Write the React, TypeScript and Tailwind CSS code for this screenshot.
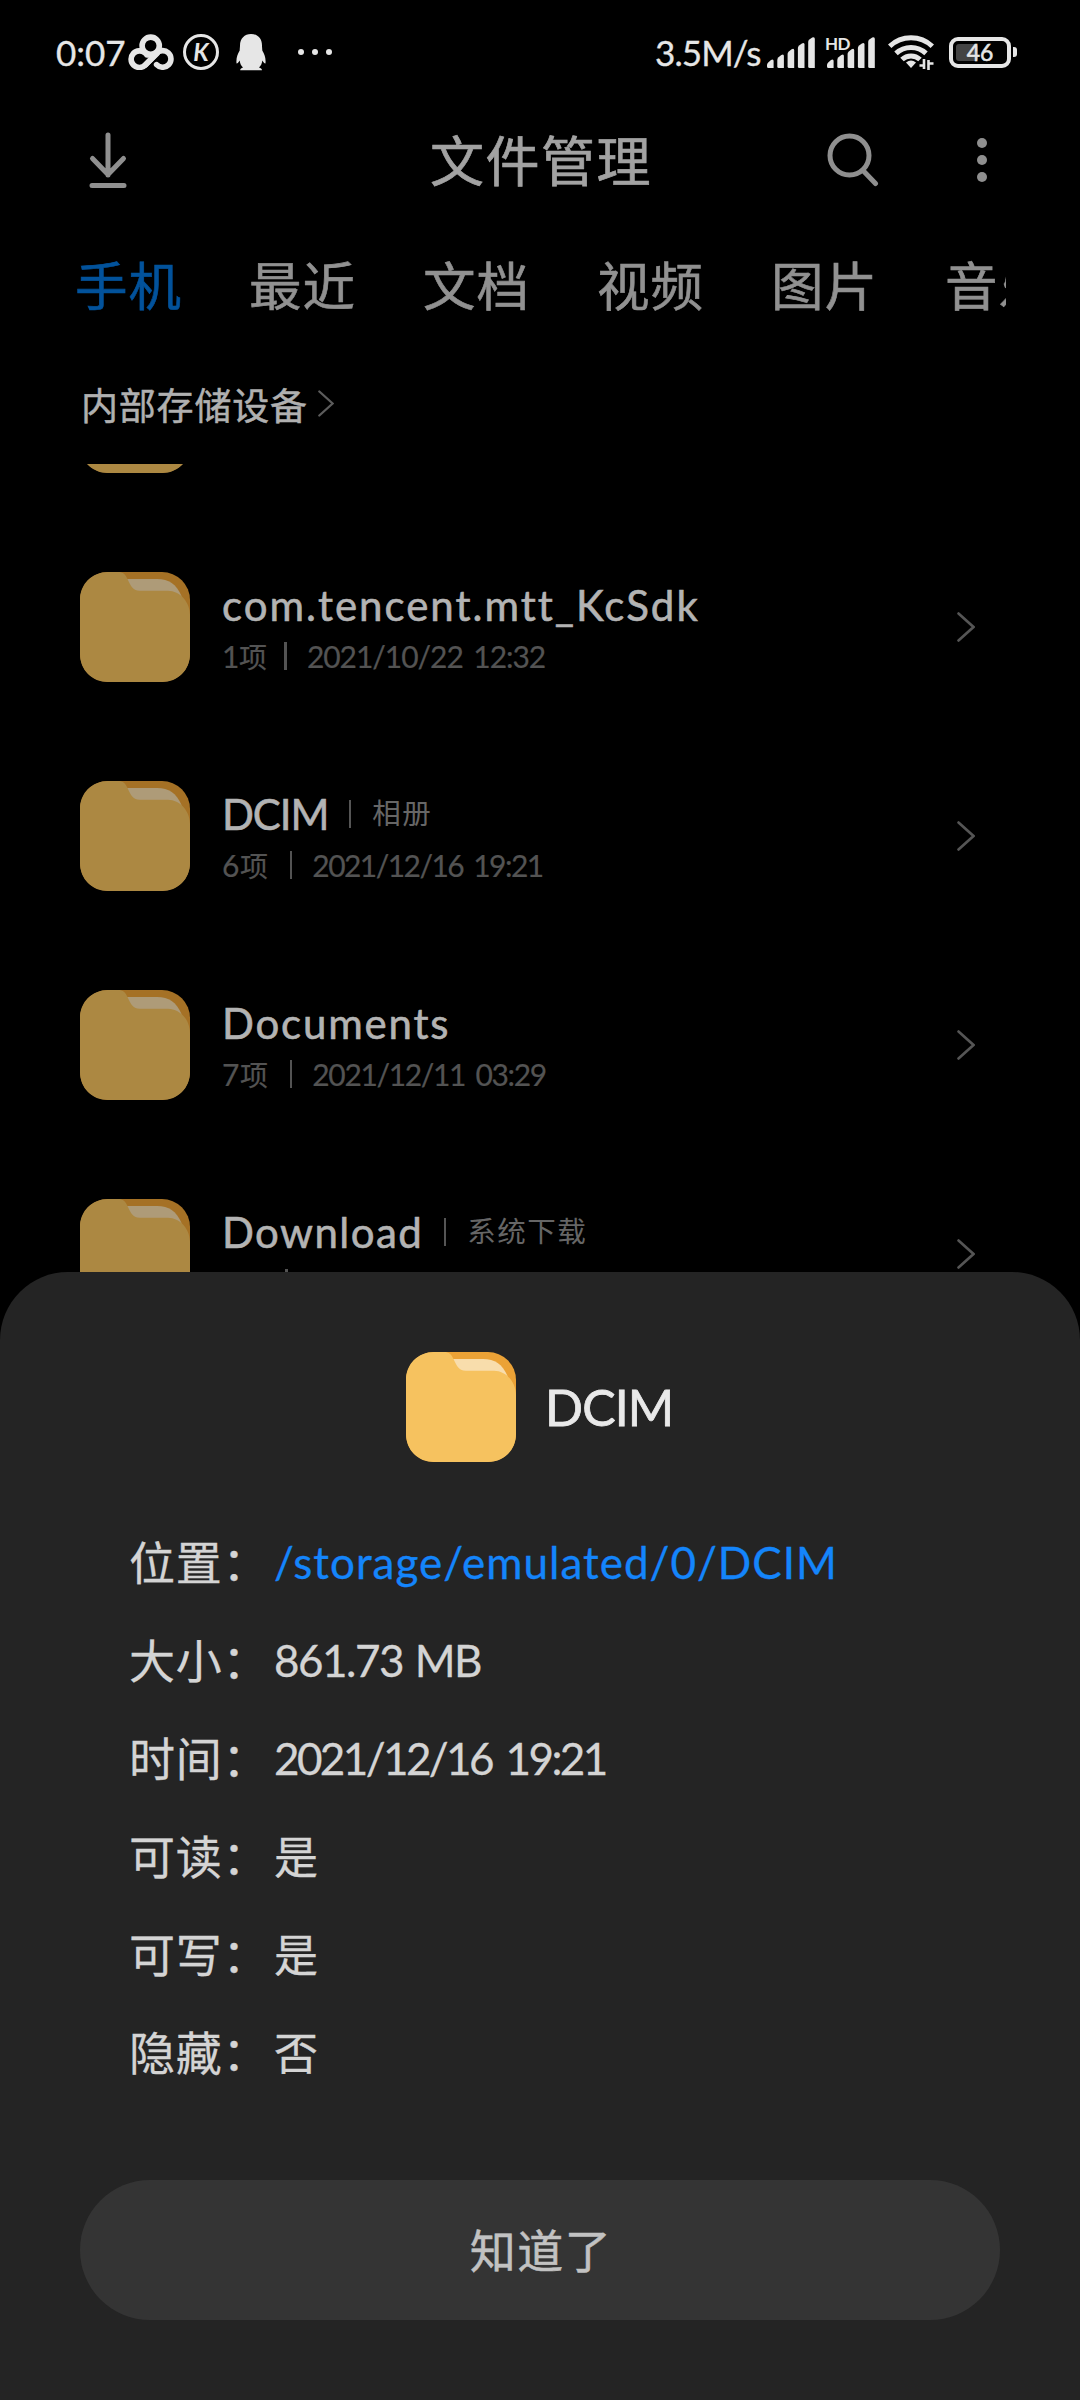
import clsx from 'clsx'

interface FolderItem {
  name: string
  alias?: string
  count: string
  date: string
  nameClass?: string
  countClass?: string
  dateClass?: string
}

interface DetailItem {
  label: string
  value: string
  valueClass?: string
}

const tabs = ['手机', '最近', '文档', '视频', '图片', '音乐']

const folders: FolderItem[] = [
  { name: 'com.tencent.mm', count: '1项', date: '2021/10/22 12:32' },
  {
    name: 'com.tencent.mtt_KcSdk',
    count: '1项',
    date: '2021/10/22 12:32',
    nameClass: 'tracking-[2px]',
    countClass: 'tracking-[-0.5px]',
    dateClass: 'tracking-[-1.05px] [word-spacing:4px]',
  },
  {
    name: 'DCIM',
    alias: '相册',
    count: '6项',
    date: '2021/12/16 19:21',
    nameClass: 'tracking-[-1.1px]',
    countClass: 'pr-[3px] tracking-[0.7px]',
    dateClass: 'tracking-[-1.55px] [word-spacing:4px]',
  },
  {
    name: 'Documents',
    count: '7项',
    date: '2021/12/11 03:29',
    nameClass: 'tracking-[1.8px]',
    countClass: 'pr-[3px] tracking-[0.7px]',
    dateClass: 'tracking-[-1.35px] [word-spacing:4px]',
  },
  { name: 'Download', alias: '系统下载', count: '1项', date: '2021/12/16 19:21', nameClass: 'tracking-[1.45px]' },
]

const details: DetailItem[] = [
  { label: '位置：', value: '/storage/emulated/0/DCIM', valueClass: 'tracking-[1px] text-[#1485fb]' },
  { label: '大小：', value: '861.73 MB', valueClass: 'tracking-[-1.5px] [word-spacing:2px]' },
  { label: '时间：', value: '2021/12/16 19:21', valueClass: 'tracking-[-2.6px] [word-spacing:5px]' },
  { label: '可读：', value: '是', valueClass: 'pt-[2px]' },
  { label: '可写：', value: '是', valueClass: 'pt-[2px]' },
  { label: '隐藏：', value: '否', valueClass: 'pt-[2px]' },
]

function FolderIcon({ className }: { className?: string }) {
  return (
    <svg className={clsx('h-[110px] w-[110px] shrink-0', className)} viewBox="0 0 110 110">
      <rect width="110" height="110" rx="28" fill="#eba236" />
      <path d="M44 7H77C89 7 96 12 101.5 24V40H44Z" fill="#f8ddac" />
      <path
        d="M28 0H38C43 0 45.5 2.5 47.5 7C50.5 13 52 18.7 60 18.7H88C100 18.7 110 30 110 43V82C110 98 98 110 82 110H28C12 110 0 98 0 82V28C0 12 12 0 28 0Z"
        fill="#f6c25f"
      />
    </svg>
  )
}

function Chevron({ className }: { className?: string }) {
  return (
    <svg className={clsx('shrink-0', className)} viewBox="0 0 18 30" fill="none" stroke="currentColor" strokeWidth="2.6" strokeLinecap="round">
      <path d="M1.5 1.5L16.5 15L1.5 28.5" />
    </svg>
  )
}

function SignalBars() {
  return (
    <svg className="h-[31px] w-[48px] shrink-0" viewBox="0 0 48 31" fill="currentColor">
      <path d="M0 28Q0 26.5 1.2 25.5L4 23Q6.6 21.4 6.6 24V31H1.5Q0 31 0 29.5Z" />
      <path d="M10.3 23Q10.3 21.3 11.5 20.3L14.3 18Q16.9 16.4 16.9 19V31H11.8Q10.3 31 10.3 29.5Z" />
      <path d="M20.6 17Q20.6 15.5 21.8 14.5L24.6 12.2Q27.2 10.8 27.2 13.4V31H22.1Q20.6 31 20.6 29.5Z" />
      <path d="M30.9 11Q30.9 9.5 32.1 8.5L34.9 6.4Q37.5 5 37.5 7.6V31H32.4Q30.9 31 30.9 29.5Z" />
      <path d="M41.2 5Q41.2 3.3 42.4 2.4L45.2 .5Q47.8 -.6 47.8 2V31H42.7Q41.2 31 41.2 29.5Z" />
    </svg>
  )
}

function StatusBar() {
  return (
    <div className="flex h-[104px] items-center pl-[56px] text-[#e6e6e6]">
      <span className="w-[72px] text-[35px] leading-none [-webkit-text-stroke:0.3px]">0:07</span>
      <svg className="h-[36px] w-[46px] shrink-0" viewBox="128 34 46 36" fill="none" stroke="currentColor" strokeWidth="5.6" strokeLinecap="round">
        <circle cx="150.7" cy="45.7" r="8.6" />
        <path d="M157 53.5L145.3 65A8.3 8.3 0 1 1 145 53" />
        <path d="M145.3 65L156.3 53.6A8.3 8.3 0 1 1 156.6 64.6" />
        <path d="M147 55H154" />
      </svg>
      <div className="ml-[9px] flex h-[36px] w-[36px] shrink-0 items-center justify-center rounded-full border-[3.5px] border-current">
        <span className="text-[24px] leading-none font-bold italic">K</span>
      </div>
      <svg className="ml-[17px] h-[37px] w-[30px] shrink-0" viewBox="0 0 30 37" fill="currentColor">
        <path d="M15 0C21.5 0 26 4.5 26 11.5C26 13.5 26.3 14.5 26.3 16.5C28.5 20 30 24.5 29.5 29C29.3 30.5 28 29 26.3 26.5C26 29.5 25 31.5 23 33.5C24.5 34 26 34.8 26 36.3H4.2C4.2 34.8 5.5 34 7 33.5C5 31.5 4 29.5 3.7 26.5C2 29 .7 30.5 .5 29C0 24.5 1.5 20 3.7 16.5C3.7 14.5 4 13.5 4 11.5C4 4.5 8.5 0 15 0Z" />
      </svg>
      <div className="ml-8 flex gap-2">
        <i className="size-1.5 rounded-full bg-current" />
        <i className="size-1.5 rounded-full bg-current" />
        <i className="size-1.5 rounded-full bg-current" />
      </div>
      <span className="ml-auto w-[112px] text-[35px] leading-none tracking-[-0.9px] [-webkit-text-stroke:0.3px]">3.5M/s</span>
      <SignalBars />
      <div className="relative ml-[12px] flex">
        <SignalBars />
        <span className="absolute -top-[2px] -left-[2px] text-[17px] leading-none font-bold tracking-[-0.5px]">HD</span>
      </div>
      <svg className="ml-[13px] h-[36px] w-[46px] shrink-0" viewBox="0 0 46 36" fill="none" stroke="currentColor" strokeWidth="5">
        <path d="M1.7 12.3A31 31 0 0 1 44.3 12.3" />
        <path d="M8 19.3A22 22 0 0 1 38 19.3" />
        <path d="M14 25.5A13 13 0 0 1 32 25.5" />
        <path d="M23 26.5Q25.5 26.5 28 28.5L23 34L18 28.5Q20.5 26.5 23 26.5Z" fill="currentColor" stroke="none" />
        <path d="M31.5 31.5H36.5M36 25V35M40.5 26V36M41 29.5H45.5" strokeWidth="2.6" />
      </svg>
      <div className="relative ml-[15px] flex h-[31px] w-[62px] items-center justify-center rounded-[9px] border-4 border-current">
        <i className="absolute top-[3px] left-[3px] h-[17px] w-[22px] rounded-[3px] bg-[#444]" />
        <span className="relative text-[23px] leading-none [-webkit-text-stroke:0.5px]">46</span>
      </div>
      <i className="mr-[63px] ml-[2px] h-[10px] w-[4px] rounded-r-[3px] bg-current" />
    </div>
  )
}

function Header() {
  return (
    <header className="grid h-[114px] grid-cols-[1fr_auto_1fr] items-center text-[#8f8f8f]">
      <svg className="mb-[3px] ml-[88px] h-[56px] w-[40px]" viewBox="0 0 40 56" fill="none" stroke="currentColor" strokeWidth="5" strokeLinecap="round" strokeLinejoin="round">
        <path d="M20 3V43M4.5 26.5L20 42.5L35.5 26.5M4 53.5H36" />
      </svg>
      <h1 className="pt-[2px] pl-[2px] text-[54px] leading-none tracking-[1.5px] text-[#a2a2a2] [-webkit-text-stroke:0.7px]">文件管理</h1>
      <div className="mb-[2px] flex items-center justify-end">
        <svg className="h-[54px] w-[54px]" viewBox="0 0 54 54" fill="none" stroke="currentColor" strokeWidth="5" strokeLinecap="round">
          <circle cx="23.5" cy="22.5" r="19.5" />
          <path d="M37.5 38L49.5 50.5" />
        </svg>
        <div className="mr-[93px] ml-[97px] flex flex-col gap-[7px]">
          <i className="size-2.5 rounded-full bg-current" />
          <i className="size-2.5 rounded-full bg-current" />
          <i className="size-2.5 rounded-full bg-current" />
        </div>
      </div>
    </header>
  )
}

function FolderRow({ folder }: { folder: FolderItem }) {
  return (
    <div className="flex h-[110px] shrink-0 items-center pr-[105px] pl-20">
      <FolderIcon className="opacity-70" />
      <div className="ml-[32px] flex flex-col">
        <div className="flex h-[58px] items-center">
          <span className={clsx('text-[42px] leading-none text-[#b3b3b3] [-webkit-text-stroke:0.6px]', folder.nameClass)}>{folder.name}</span>
          {folder.alias && (
            <>
              <i className="ml-[21px] h-[28px] w-[2px] bg-[#555]" />
              <span className="ml-[21px] text-[28.5px] leading-none tracking-[1.5px] text-[#666]">{folder.alias}</span>
            </>
          )}
        </div>
        <div className="flex h-[45px] items-center text-[30px] leading-none text-[#535353] [-webkit-text-stroke:0.2px]">
          <span className={folder.countClass}>
            {folder.count[0]}
            <span className="text-[28px]">{folder.count.slice(1)}</span>
          </span>
          <i className="mr-[20px] ml-[18px] h-[28px] w-[2.5px] bg-current" />
          <span className={folder.dateClass}>{folder.date}</span>
        </div>
      </div>
      <Chevron className="ml-auto h-[30px] w-[18px] text-[#555]" />
    </div>
  )
}

function DetailSheet() {
  return (
    <section className="absolute inset-x-0 bottom-0 h-[1128px] rounded-t-[68px] bg-[#242424] px-20 pt-20">
      <div className="flex items-center pl-[326px]">
        <FolderIcon />
        <h2 className="ml-[29px] text-[50px] leading-none tracking-[-0.9px] text-[#e9e9e9] [-webkit-text-stroke:0.8px]">DCIM</h2>
      </div>
      <dl className="mt-[51px] pl-[49px] text-[#d4d4d4] [-webkit-text-stroke:0.3px]">
        {details.map((item) => (
          <div key={item.label} className="flex h-[98px] items-center">
            <dt className="w-[145px] pt-[1px] text-[46px] leading-none tracking-[0.7px]">{item.label}</dt>
            <dd className={clsx('text-[44px] leading-none', item.valueClass)}>{item.value}</dd>
          </div>
        ))}
      </dl>
      <button className="mt-[79px] flex h-[140px] w-full items-center justify-center rounded-full bg-[#343434] pt-[2px] pl-[2px] text-[46px] leading-none tracking-[1.5px] text-[#c2c2c2] [-webkit-text-stroke:0.5px]">
        知道了
      </button>
    </section>
  )
}

export default function App() {
  return (
    <div className="relative flex h-[2400px] w-[1080px] flex-col overflow-hidden bg-black font-['Lato','Noto_Sans_CJK_SC',sans-serif]">
      <StatusBar />
      <Header />
      <nav className="mr-[74px] ml-[75px] flex h-[136px] items-center gap-[68px] overflow-hidden text-[#919191] [-webkit-text-stroke:0.6px]">
        {tabs.map((tab, i) => (
          <span key={tab} className={clsx('w-[106px] shrink-0 text-[52.5px] leading-none tracking-[1px] whitespace-nowrap', i === 0 && 'text-[#02529b]')}>
            {tab}
          </span>
        ))}
      </nav>
      <div className="flex h-[102px] items-center pl-[81px]">
        <span className="text-[37px] leading-none tracking-[0.8px] text-[#b0b0b0] [-webkit-text-stroke:0.5px]">内部存储设备</span>
        <Chevron className="mb-[3px] ml-[10px] h-[29px] w-[16px] text-[#5c5c5c]" />
      </div>
      <main className="mt-2 h-[900px] overflow-hidden">
        <div className="-mt-[101px] flex flex-col gap-[99px]">
          {folders.map((folder) => (
            <FolderRow key={folder.name} folder={folder} />
          ))}
        </div>
      </main>
      <DetailSheet />
    </div>
  )
}
